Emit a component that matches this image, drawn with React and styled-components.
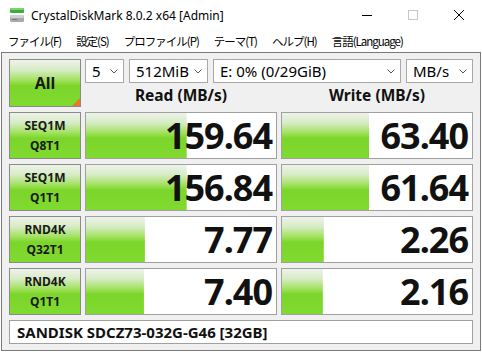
import React from 'react';
import styled, { createGlobalStyle } from 'styled-components';

const GlobalStyle = createGlobalStyle`
  html, body {
    margin: 0;
    padding: 0;
    background: #ffffff;
  }
  body {
    font-family: "Noto Sans", "Noto Sans CJK JP", sans-serif;
  }
`;

const Window = styled.div`
  width: 482px;
  height: 352px;
  display: flex;
  flex-direction: column;
  background: #ffffff;
  overflow: hidden;
`;

const TitleBar = styled.div`
  height: 30px;
  display: flex;
  align-items: center;
  padding-left: 9px;
  color: #000;
  font-size: 12px;
`;

const TitleText = styled.span`
  margin-left: 6px;
  flex: 1;
`;

const WinButton = styled.div`
  width: 46px;
  height: 30px;
  display: flex;
  align-items: center;
  justify-content: center;
`;

const MenuBar = styled.div`
  height: 22px;
  display: flex;
  align-items: center;
  gap: 15px;
  padding-left: 8px;
  font-size: 11.5px;
  letter-spacing: -1px;
  font-family: "Noto Sans CJK JP", "Noto Sans", sans-serif;
  color: #000;
`;

const Content = styled.div`
  margin: 0 1px 1px 1px;
  flex: 1;
  border: 1px solid #7a7a7a;
  background: #f0f0f0;
  padding: 6px 0 0 7px;
  display: grid;
  grid-template-columns: 72px 192px 192px;
  grid-template-rows: 48px repeat(4, 47px) 24px;
  column-gap: 4px;
  row-gap: 5px;
`;

const greenGradient = `linear-gradient(180deg, #eef2eb 0%, #d6ecc4 22%, #a2e15e 44%, #7cd52a 56%, #80da30 100%)`;

const TestButton = styled.div`
  position: relative;
  box-sizing: border-box;
  border: 1px solid #8a8a8a;
  background: ${greenGradient};
  display: flex;
  flex-direction: column;
  align-items: center;
  justify-content: center;
  font-weight: 700;
  font-size: ${({ $big }) => ($big ? '16px' : '12px')};
  line-height: 20px;
  color: #1a1a1a;
`;

const Corner = styled.div`
  position: absolute;
  right: 0;
  bottom: 0;
  width: 0;
  height: 0;
  border-left: 8px solid transparent;
  border-bottom: 8px solid #e8782a;
`;

const TopArea = styled.div`
  grid-column: 2 / 4;
  display: grid;
  grid-template-columns: 192px 192px;
  grid-template-rows: 24px 24px;
  column-gap: 4px;
`;

const ComboRow = styled.div`
  grid-column: 1 / 3;
  display: flex;
  gap: 5px;
`;

const Combo = styled.div`
  box-sizing: border-box;
  width: ${({ $w }) => $w}px;
  height: 24px;
  border: 1px solid #a8a8a8;
  background: #ffffff;
  display: flex;
  align-items: center;
  justify-content: space-between;
  padding: 0 5px 0 6px;
  font-size: 15px;
  color: #000;
`;

const Header = styled.div`
  display: flex;
  align-items: center;
  justify-content: center;
  font-weight: 700;
  font-size: 15.5px;
  color: #111;
`;

const ValueCell = styled.div`
  box-sizing: border-box;
  border: 1px solid #a0a0a0;
  background-color: #ffffff;
  background-image: ${greenGradient};
  background-repeat: no-repeat;
  background-size: ${({ $pct }) => $pct}% 100%;
  display: flex;
  align-items: center;
  justify-content: flex-end;
  padding-right: 4px;
  font-weight: 700;
  font-size: 36px;
  letter-spacing: -1px;
  color: #111;
`;

const Footer = styled.div`
  grid-column: 1 / 4;
  box-sizing: border-box;
  border: 1px solid #a0a0a0;
  background: #ffffff;
  display: flex;
  align-items: center;
  padding-left: 7px;
  font-weight: 700;
  font-size: 15px;
  color: #111;
`;

const Chevron = () => (
  <svg width="8" height="5" viewBox="0 0 8 5">
    <path d="M0.5 0.5 L4 4 L7.5 0.5" fill="none" stroke="#555" strokeWidth="1" />
  </svg>
);

const AppIcon = () => (
  <svg width="16" height="16" viewBox="0 0 16 16">
    <rect x="1" y="1" width="14" height="5" rx="1" fill="#3cae3c" />
    <rect x="1" y="1" width="14" height="2" rx="1" fill="#79d46a" />
    <rect x="1" y="8" width="14" height="7" rx="1.5" fill="#a9a9a9" />
    <rect x="1" y="8" width="14" height="3" rx="1.5" fill="#cfcfcf" />
    <rect x="3" y="12" width="5" height="1" fill="#777" />
  </svg>
);

const rows = [
  { a: 'SEQ1M', b: 'Q8T1', read: '159.64', rp: 53, write: '63.40', wp: 46 },
  { a: 'SEQ1M', b: 'Q1T1', read: '156.84', rp: 53, write: '61.64', wp: 46 },
  { a: 'RND4K', b: 'Q32T1', read: '7.77', rp: 31, write: '2.26', wp: 22 },
  { a: 'RND4K', b: 'Q1T1', read: '7.40', rp: 30.5, write: '2.16', wp: 21.5 },
];

const menus = ['ファイル(F)', '設定(S)', 'プロファイル(P)', 'テーマ(T)', 'ヘルプ(H)', '言語(Language)'];

export default function App() {
  return (
    <>
      <GlobalStyle />
      <Window>
        <TitleBar>
          <AppIcon />
          <TitleText>CrystalDiskMark 8.0.2 x64 [Admin]</TitleText>
          <WinButton>
            <svg width="10" height="10" viewBox="0 0 10 10">
              <path d="M0 5.5 H10" stroke="#000" strokeWidth="1" />
            </svg>
          </WinButton>
          <WinButton>
            <svg width="10" height="10" viewBox="0 0 10 10">
              <rect x="0.5" y="0.5" width="9" height="9" fill="none" stroke="#c8c8c8" strokeWidth="1" />
            </svg>
          </WinButton>
          <WinButton>
            <svg width="10" height="10" viewBox="0 0 10 10">
              <path d="M0 0 L10 10 M10 0 L0 10" stroke="#000" strokeWidth="1" />
            </svg>
          </WinButton>
        </TitleBar>
        <MenuBar>
          {menus.map((m) => (
            <span key={m}>{m}</span>
          ))}
        </MenuBar>
        <Content>
          <TestButton $big>
            All
            <Corner />
          </TestButton>
          <TopArea>
            <ComboRow>
              <Combo $w={39}>5<Chevron /></Combo>
              <Combo $w={79}>512MiB<Chevron /></Combo>
              <Combo $w={188}>E: 0% (0/29GiB)<Chevron /></Combo>
              <Combo $w={67}>MB/s<Chevron /></Combo>
            </ComboRow>
            <Header>Read (MB/s)</Header>
            <Header>Write (MB/s)</Header>
          </TopArea>
          {rows.map((r, i) => (
            <React.Fragment key={i}>
              <TestButton>
                <span>{r.a}</span>
                <span>{r.b}</span>
              </TestButton>
              <ValueCell $pct={r.rp}>{r.read}</ValueCell>
              <ValueCell $pct={r.wp}>{r.write}</ValueCell>
            </React.Fragment>
          ))}
          <Footer>SANDISK SDCZ73-032G-G46 [32GB]</Footer>
        </Content>
      </Window>
    </>
  );
}
